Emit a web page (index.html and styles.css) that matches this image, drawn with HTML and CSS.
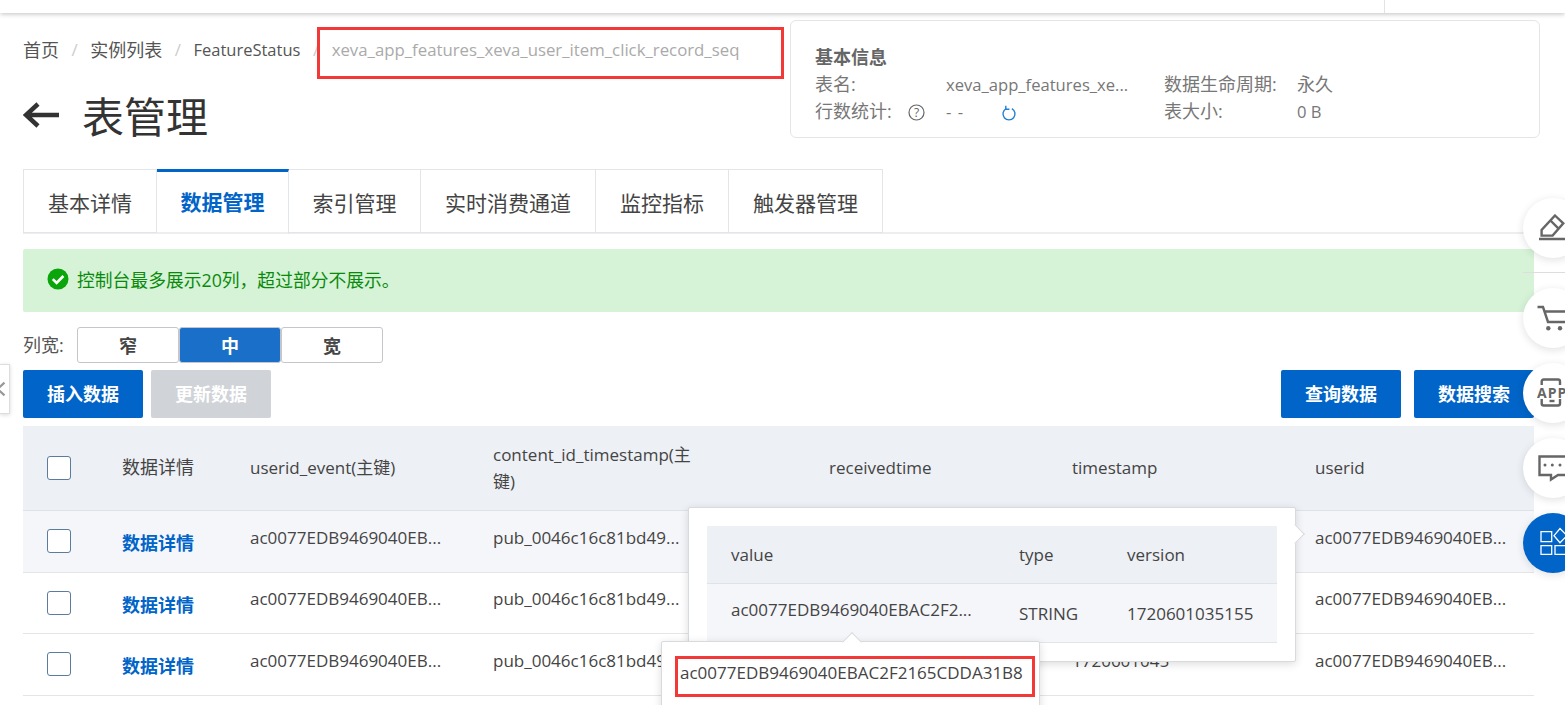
FILE: index.html
```html
<!DOCTYPE html>
<html lang="zh-CN">
<head>
    <meta charset="UTF-8">
    <title>表管理</title>
    <link rel="stylesheet" href="styles.css">
</head>
<body>
    <div class="topbar"><span class="topbar-line"></span></div>
    <main class="page">
        <div class="head">
            <div class="head-left">
                <nav class="crumbs">
                    <span>首页</span><i>/</i><span>实例列表</span><i>/</i><span class="crumb-en">FeatureStatus</span><i>/</i><span class="crumb-now">xeva_app_features_xeva_user_item_click_record_seq</span>
                </nav>
                <h1 class="title">
                    <svg class="back" viewBox="0 0 36 28" width="36" height="28"><path d="M15 3 3 14l12 11M3 14h33" fill="none" stroke="#333" stroke-width="4.5"/></svg>
                    表管理
                </h1>
            </div>
            <section class="info">
                <h4>基本信息</h4>
                <div class="info-grid">
                    <span>表名:</span><span class="val">xeva_app_features_xe...</span><span>数据生命周期:</span><span>永久</span>
                    <span class="with-help">行数统计:
                        <svg width="17" height="17" viewBox="0 0 17 17"><circle cx="8.5" cy="8.5" r="7.5" fill="none" stroke="#666" stroke-width="1.200"/><text x="8.5" y="12.5" text-anchor="middle" class="help-mark">?</text></svg>
                    </span>
                    <span class="with-refresh">- -
                        <svg width="16" height="16" viewBox="0 0 16 16"><path d="M5.2 3.6a6 6 0 1 0 5.600 0" fill="none" stroke="#1f7fd6" stroke-width="1.400"/><path d="M4.800.8v3.400H8.400" fill="none" stroke="#1f7fd6" stroke-width="1.400"/></svg>
                    </span>
                    <span>表大小:</span><span class="val">0 B</span>
                </div>
            </section>
        </div>

        <div class="tabs">
            <a>基本详情</a><a class="on">数据管理</a><a>索引管理</a><a>实时消费通道</a><a>监控指标</a><a>触发器管理</a>
        </div>

        <div class="alert">
            <svg width="22" height="22" viewBox="0 0 22 22"><circle cx="11" cy="11" r="10.5" fill="#0aa50a"/><path d="M5.8 11.2 9.6 15l6.8-7" fill="none" stroke="#fff" stroke-width="2.6"/></svg>
            控制台最多展示20列，超过部分不展示。
        </div>

        <div class="width-row">
            <span class="width-label">列宽:</span>
            <div class="seg"><a>窄</a><a class="on">中</a><a>宽</a></div>
        </div>

        <div class="actions">
            <a class="btn">插入数据</a>
            <a class="btn btn-off">更新数据</a>
            <span class="grow"></span>
            <a class="btn">查询数据</a>
            <a class="btn">数据搜索</a>
        </div>

        <table class="grid">
            <colgroup>
                <col class="c-check"><col class="c-detail"><col class="c-col"><col class="c-lock"><col class="c-gap"><col class="c-col"><col class="c-col"><col class="c-last">
            </colgroup>
            <thead>
                <tr>
                    <th><span class="box"></span></th>
                    <th class="zh">数据详情</th>
                    <th>userid_event(主键)</th>
                    <th class="lock">content_id_timestamp(主键)</th>
                    <th></th>
                    <th>receivedtime</th>
                    <th>timestamp</th>
                    <th>userid</th>
                </tr>
            </thead>
            <tbody>
                <tr class="hover">
                    <td><span class="box"></span></td>
                    <td><a class="link">数据详情</a></td>
                    <td>ac0077EDB9469040EB...</td>
                    <td>pub_0046c16c81bd49...</td>
                    <td></td><td></td><td></td>
                    <td>ac0077EDB9469040EB...</td>
                </tr>
                <tr class="short">
                    <td><span class="box"></span></td>
                    <td><a class="link">数据详情</a></td>
                    <td>ac0077EDB9469040EB...</td>
                    <td>pub_0046c16c81bd49...</td>
                    <td></td><td></td><td></td>
                    <td>ac0077EDB9469040EB...</td>
                </tr>
                <tr>
                    <td><span class="box"></span></td>
                    <td><a class="link">数据详情</a></td>
                    <td>ac0077EDB9469040EB...</td>
                    <td>pub_0046c16c81bd49...</td>
                    <td></td><td></td>
                    <td>1720601045</td>
                    <td>ac0077EDB9469040EB...</td>
                </tr>
            </tbody>
        </table>
    </main>

    <div class="pop pop-main">
        <table class="mini">
            <tr><th class="m1">value</th><th class="m2">type</th><th>version</th></tr>
            <tr><td class="m-up">ac0077EDB9469040EBAC2F2...</td><td>STRING</td><td>1720601035155</td></tr>
        </table>
    </div>
    <div class="pop pop-tip">ac0077EDB9469040EBAC2F2165CDDA31B8</div>

    <div class="mark mark-crumb"></div>
    <div class="mark mark-tip"></div>

    <div class="fold">
        <svg width="10" height="22" viewBox="0 0 10 22"><path d="M5 4-3 11l8 7" fill="none" stroke="#999" stroke-width="2.500"/></svg>
    </div>

    <aside class="float">
        <a class="fab fab-edit">
            <svg width="30" height="28" viewBox="0 0 30 28"><path d="M18 1.500 26.300 9.300 15.600 21.600H4.600V16zM13 6l8.300 8.300M2 25h28" fill="none" stroke="#666" stroke-width="2.400"/></svg>
        </a>
        <a class="fab fab-cart">
            <svg width="30" height="28" viewBox="0 0 30 28"><path d="M.5 3H6l5 15H30M7 7.500H30" fill="none" stroke="#666" stroke-width="2.400"/><circle cx="11.300" cy="24.300" r="2.200" fill="#666"/><circle cx="23" cy="24.300" r="2.200" fill="#666"/></svg>
        </a>
        <a class="fab">
            <svg width="30" height="30" viewBox="0 0 30 30"><path d="M4.700 7V3.500q0-2 2-2H21q2 0 2 2V7M4.700 21v4.500q0 2 2 2H21q2 0 2-2V21" fill="none" stroke="#666" stroke-width="2.400"/><path d="M12.500 23h5" stroke="#666" stroke-width="2.400"/><text x="0" y="19.500" class="app-mark">APP</text></svg>
        </a>
        <a class="fab">
            <svg width="30" height="28" viewBox="0 0 30 28"><path d="M32 2.500H2.500V21H14v4.500L21 21h11" fill="none" stroke="#666" stroke-width="2.400"/><circle cx="8" cy="11" r="1.500" fill="#666"/><circle cx="15.300" cy="11" r="1.500" fill="#666"/><circle cx="23" cy="11" r="1.500" fill="#666"/></svg>
        </a>
        <a class="fab fab-on">
            <svg width="30" height="32" viewBox="0 0 30 32"><path d="M4 4.700h10.700v10H4zM4 18.700h10.700v8.600H4zM18 18.700h12v8.600H18zM23 1.500l7 7.200-7 7-6-7z" fill="none" stroke="#fff" stroke-width="1.300"/></svg>
        </a>
    </aside>
</body>
</html>
```

FILE: styles.css
```css
* {
    box-sizing: border-box;
}
html, body {
    height: 705px;
    margin: 0;
    overflow: hidden;
}
body {
    position: relative;
    background: #fff;
    color: #444;
    font-family: "Open Sans", "Noto Sans CJK SC", sans-serif;
    font-size: 17px;
}
.topbar {
    height: 13px;
    background: #fff;
    box-shadow: 0 1px 5px rgba(0, 0, 0, .25);
    display: flex;
    justify-content: flex-end;
    padding-right: 180px;
}
.topbar-line {
    width: 1px;
    background: #e3e3e3;
}
.page {
    padding: 7px 31px 0 23px;
}

/* header */
.head {
    display: flex;
    justify-content: space-between;
    height: 149px;
}
.crumbs {
    display: flex;
    align-items: center;
    height: 58px;
    color: #555;
    font-size: 18px;
    white-space: nowrap;
}
.crumbs i {
    color: #ccc;
    font-size: 17px;
    font-style: normal;
    margin: 0 12.5px;
}
.crumbs .crumb-en {
    font-size: 16.5px;
}
.crumbs .crumb-now {
    color: #aaa;
    font-size: 16.8px;
}
.title {
    display: flex;
    align-items: center;
    margin: 7px 0 0;
    height: 60px;
    padding-bottom: 2px;
    font-size: 42px;
    font-weight: 400;
    color: #333;
}
.back {
    margin: 2px 23px 0 0;
}
.info {
    width: 750px;
    height: 118px;
    margin-right: -6px;
    padding: 23px 24px 0;
    border: 1px solid #e3e5e8;
    border-radius: 6px;
    font-size: 18px;
    color: #777;
}
.info h4 {
    margin: 0;
    font-size: 18px;
    line-height: 27px;
    color: #666;
}
.info-grid {
    display: grid;
    grid-template-columns: 131px 218px 133px 1fr;
    grid-auto-rows: 27px;
    align-items: center;
    line-height: 27px;
}
.info-grid .val {
    font-size: 16.6px;
}
.info-grid svg {
    vertical-align: -3px;
}
.with-help {
    white-space: nowrap;
}
.with-help svg {
    margin-left: 12px;
}
.with-refresh {
    font-size: 16.6px;
    letter-spacing: 1px;
}
.with-refresh svg {
    margin-left: 32px;
}
.help-mark {
    font-size: 12px;
    fill: #666;
}

/* tabs */
.tabs {
    display: flex;
    height: 65px;
    border-bottom: 2px solid #eceef0;
}
.tabs a {
    height: 64px;
    padding: 0 24px;
    line-height: 66px;
    font-size: 21px;
    color: #444;
    border: 1px solid #e3e5e8;
    border-left: 0;
}
.tabs a:first-child {
    border-left: 1px solid #e3e5e8;
}
.tabs a:nth-child(3) {
    padding: 0 23.5px;
}
.tabs a.on {
    height: 65px;
    padding: 0 23.5px;
    border-top: 3px solid #0064c8;
    border-bottom: 0;
    line-height: 60px;
    font-weight: 700;
    color: #0064c8;
}

/* notice */
.alert {
    display: flex;
    align-items: center;
    gap: 8px;
    height: 63px;
    margin-top: 15px;
    padding: 0 0 3px 24px;
    border-radius: 2px;
    background: #d6f3d8;
    color: #0a8a0a;
    font-size: 17.8px;
}
.width-row {
    display: flex;
    align-items: center;
    height: 36px;
    margin-top: 15px;
}
.width-label {
    width: 54px;
    padding-bottom: 2px;
    font-size: 18px;
    color: #555;
}
.seg {
    display: flex;
}
.seg a {
    width: 102px;
    height: 36px;
    line-height: 36px;
    text-align: center;
    font-size: 18px;
    font-weight: 700;
    color: #444;
    border: 1px solid #c4c6cc;
    border-radius: 3px;
}
.seg a.on {
    background: #1a70c8;
    color: #fff;
}
.actions {
    display: flex;
    gap: 8px;
    margin-top: 7px;
}
.grow {
    flex: 1;
}
.btn {
    width: 120px;
    height: 48px;
    line-height: 48px;
    text-align: center;
    font-size: 18px;
    font-weight: 700;
    color: #fff;
    background: #0064c8;
    border-radius: 2px;
}
.btn + .btn {
    margin-left: 5px;
}
.btn-off {
    background: #d0d3d8;
}
.actions .btn:nth-child(2) {
    margin-left: 0;
}

/* data table */
.grid {
    width: 1511px;
    margin-top: 8px;
    border-collapse: collapse;
    table-layout: fixed;
    color: #444;
}
.c-check { width: 75px; }
.c-detail { width: 128px; }
.c-col { width: 243px; }
.c-lock { width: 246px; }
.c-gap { width: 90px; }
.c-last { width: 243px; }
.grid th {
    height: 84px;
    padding: 0 24px;
    background: #edf0f5;
    font-weight: 400;
    text-align: left;
    line-height: 27px;
    border-bottom: 1px solid #e0e2e6;
    word-break: break-all;
}
.grid th.zh {
    font-size: 18px;
}
.grid th.lock {
    box-shadow: 3px 0 5px rgba(0, 0, 0, .1);
    clip-path: inset(0 -8px 0 0);
    padding-right: 22px;
}
.grid td {
    height: 62px;
    padding: 0 24px 8px;
    border-bottom: 1px solid #e3e5e8;
    white-space: nowrap;
    overflow: hidden;
}
.grid tr.short td {
    height: 61px;
}
.grid tr.hover td {
    background: #f5f6fa;
}
.grid td:first-child {
    padding-bottom: 0;
}
.grid td:nth-child(2) {
    padding: 2px 24px 0;
}
.box {
    display: block;
    width: 24px;
    height: 24px;
    background: #fff;
    border: 1px solid #5b7c9e;
    border-radius: 3px;
}
.link {
    font-size: 18px;
    font-weight: 700;
    color: #0064c8;
}

/* popovers */
.pop {
    position: absolute;
    background: #fff;
    border: 1px solid #d8dade;
    border-radius: 2px;
    box-shadow: 0 2px 8px rgba(0, 0, 0, .14);
}
.pop::after {
    content: "";
    position: absolute;
    width: 13px;
    height: 13px;
    background: #fff;
    border: 1px solid #d8dade;
    border-width: 1px 1px 0 0;
    transform: rotate(45deg);
}
.pop-main {
    left: 688px;
    top: 507px;
    width: 608px;
    height: 155px;
    padding: 18px;
}
.pop-main::after {
    right: -7px;
    top: 19px;
}
.pop-tip {
    left: 661px;
    top: 641px;
    width: 379px;
    height: 80px;
    padding: 19px 0 0 18px;
    white-space: nowrap;
}
.pop-tip::after {
    left: 183px;
    top: -7px;
    transform: rotate(-45deg);
}
.mini {
    width: 570px;
    border-collapse: collapse;
    table-layout: fixed;
}
.mini th {
    height: 57px;
    padding: 0 0 0 24px;
    background: #edf0f5;
    font-weight: 400;
    text-align: left;
    border-bottom: 1px solid #e0e2e6;
}
.mini td {
    height: 59px;
    padding: 1px 0 0 24px;
    background: #f5f6fa;
    border-bottom: 1px solid #e3e5e8;
    white-space: nowrap;
    overflow: hidden;
}
.mini .m1 { width: 288px; }
.mini .m2 { width: 108px; }
.mini td.m-up {
    padding: 0 0 6px 24px;
}

/* red marks */
.mark {
    position: absolute;
    border: 3px solid #f33838;
}
.mark-crumb {
    left: 317px;
    top: 27px;
    width: 467px;
    height: 52px;
}
.mark-tip {
    left: 675px;
    top: 656px;
    width: 360px;
    height: 41px;
}

/* edge widgets */
.fold {
    position: absolute;
    left: 0;
    top: 364px;
    width: 10px;
    height: 50px;
    display: flex;
    align-items: center;
    background: #fff;
    border: 1px solid #ddd;
    border-left: 0;
    box-shadow: 0 1px 4px rgba(0, 0, 0, .15);
}
.float {
    position: absolute;
    left: 1523px;
    top: 198px;
    display: flex;
    flex-direction: column;
    gap: 15px;
}
.fab {
    position: relative;
    display: flex;
    align-items: center;
    flex-shrink: 0;
    width: 60px;
    height: 60px;
    padding-left: 14px;
    border-radius: 50%;
    background: #fff;
    box-shadow: 0 2px 8px rgba(0, 0, 0, .12);
}
.fab-edit::after {
    content: "";
    position: absolute;
    left: 0;
    top: 74px;
    width: 60px;
    height: 1px;
    background: #ddd;
}
.fab-cart {
    margin-top: 15px;
}
.fab-on {
    background: #0064c8;
}
.app-mark {
    font-size: 14px;
    font-weight: 700;
    letter-spacing: 1px;
    fill: #666;
}
```
